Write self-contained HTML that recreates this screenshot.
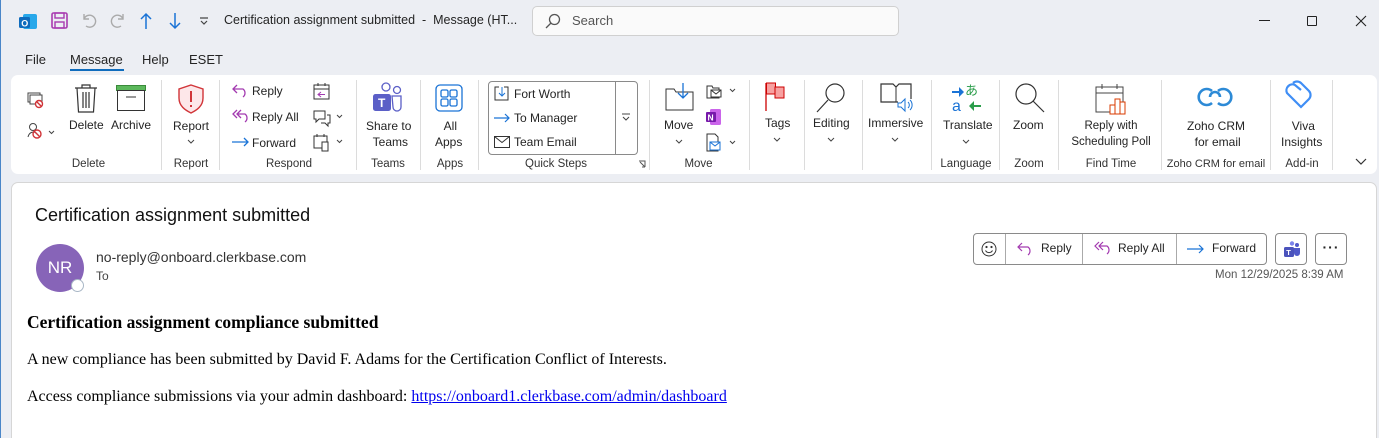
<!DOCTYPE html>
<html><head><meta charset="utf-8"><style>
*{margin:0;padding:0;box-sizing:border-box}
html,body{width:1379px;height:438px;overflow:hidden}
body{background:#eceef3;font-family:"Segoe UI","Liberation Sans",sans-serif;color:#242424;position:relative;border-left:1px solid #4a86c8}
.a{position:absolute;white-space:nowrap}
.t{font-size:12px}
.lbl{position:absolute;top:158px;font-size:11.5px;color:#333;text-align:center}
.sep{position:absolute;top:80px;width:1px;height:90px;background:#dcdcdc}
svg{position:absolute;overflow:visible}
</style></head><body>
<!-- title bar -->
<svg style="left:17px;top:12px" width="20" height="20"><rect x="5" y="2" width="14" height="15" rx="2" fill="#28a8ea"/><rect x="1" y="5" width="11" height="11" rx="1.5" fill="#0f6cbd"/><text x="3.2" y="14.5" font-size="9" font-weight="bold" fill="#fff" font-family="Liberation Sans">O</text></svg>
<svg style="left:50px;top:12px" width="18" height="18"><rect x="1" y="1" width="15" height="15" rx="1.5" fill="none" stroke="#a83ab0" stroke-width="1.6"/><rect x="4" y="1" width="9" height="5" fill="none" stroke="#a83ab0" stroke-width="1.4"/><rect x="4" y="10" width="9" height="6" fill="none" stroke="#a83ab0" stroke-width="1.4"/></svg>
<svg style="left:80px;top:12px" width="18" height="18" fill="none" stroke="#aaa" stroke-width="1.4"><path d="M3 2v5h5M3 7a6 6 0 1 1 2 7"/></svg>
<svg style="left:108px;top:12px" width="18" height="18" fill="none" stroke="#aaa" stroke-width="1.4"><path d="M14 2v5h-5M14 7a6 6 0 1 0-2 7"/></svg>
<svg style="left:138px;top:12px" width="14" height="18" fill="none" stroke="#1a73d6" stroke-width="1.5"><path d="M7 17V2M2 7l5-5 5 5"/></svg>
<svg style="left:167px;top:12px" width="14" height="18" fill="none" stroke="#1a73d6" stroke-width="1.5"><path d="M7 1v15M2 11l5 5 5-5"/></svg>
<svg style="left:198px;top:17px" width="10" height="8" fill="none" stroke="#444" stroke-width="1.2"><path d="M1 1h8M2 4l3 3 3-3"/></svg>
<div class="a t" style="left:223px;top:13px;font-size:12.5px">Certification assignment submitted&nbsp; -&nbsp; Message (HT...</div>
<div class="a" style="left:531px;top:6px;width:367px;height:30px;background:#fafafa;border:1px solid #d0d0d0;border-radius:5px"></div>
<svg style="left:544px;top:13px" width="16" height="16" fill="none" stroke="#555" stroke-width="1.3"><circle cx="9.5" cy="6.5" r="5"/><path d="M6 10l-5 5"/></svg>
<div class="a" style="left:571px;top:13px;font-size:13px;color:#555">Search</div>
<div class="a" style="left:1258px;top:20px;width:11px;height:1px;background:#222"></div>
<div class="a" style="left:1306px;top:16px;width:10px;height:10px;border:1px solid #222;border-radius:1px"></div>
<svg style="left:1354px;top:15px" width="12" height="12" stroke="#222" stroke-width="1.1"><path d="M1 1l10 10M11 1L1 11"/></svg>
<!-- tabs -->
<div class="a" style="left:24px;top:52px;font-size:13px">File</div>
<div class="a" style="left:69px;top:52px;font-size:13px">Message</div>
<div class="a" style="left:69px;top:69px;width:54px;height:2px;background:#0f6cbd"></div>
<div class="a" style="left:141px;top:52px;font-size:13px">Help</div>
<div class="a" style="left:188px;top:52px;font-size:13px">ESET</div>
<!-- ribbon -->
<div class="a" style="left:10px;top:75px;width:1366px;height:99px;background:#fff;border-radius:7px"></div>
<div class="sep" style="left:160px"></div><div class="sep" style="left:218px"></div><div class="sep" style="left:355px"></div><div class="sep" style="left:419px"></div><div class="sep" style="left:477px"></div><div class="sep" style="left:648px"></div><div class="sep" style="left:748px"></div><div class="sep" style="left:803px"></div><div class="sep" style="left:861px"></div><div class="sep" style="left:930px"></div><div class="sep" style="left:998px"></div><div class="sep" style="left:1057px"></div><div class="sep" style="left:1160px"></div><div class="sep" style="left:1269px"></div><div class="sep" style="left:1331px"></div>
<!-- delete group -->
<svg style="left:26px;top:92px" width="18" height="16"><rect x="1" y="1" width="12" height="9" fill="none" stroke="#444"/><rect x="3" y="3" width="12" height="9" fill="#fff" stroke="#444"/><circle cx="12" cy="12" r="3.5" fill="#fff" stroke="#d13438" stroke-width="1.4"/><path d="M9.5 9.5l5 5" stroke="#d13438" stroke-width="1.4"/></svg>
<svg style="left:26px;top:122px" width="30" height="18" fill="none"><circle cx="6" cy="5" r="3.5" stroke="#444"/><path d="M1 15c1-5 6-6 8-4" stroke="#444"/><circle cx="10" cy="12" r="4" stroke="#d13438" stroke-width="1.4"/><path d="M7 9l6 6" stroke="#d13438" stroke-width="1.4"/><path d="M22 9l2.5 2.5L27 9" stroke="#444"/></svg>
<svg style="left:73px;top:83px" width="24" height="30" fill="none" stroke="#333" stroke-width="1.2"><path d="M1 5h22M8 5V2h8v3M3 5l1.5 24h15L21 5M9 9v16M12 9v16M15 9v16"/></svg>
<div class="a t" style="left:68px;top:118px">Delete</div>
<svg style="left:115px;top:85px" width="30" height="27"><rect x="0.5" y="0.5" width="29" height="5" fill="#5cb85c" stroke="#3a8a3a"/><rect x="1.5" y="5.5" width="27" height="20" fill="none" stroke="#333"/><path d="M10 12h10" stroke="#333"/></svg>
<div class="a t" style="left:110px;top:118px">Archive</div>
<div class="lbl" style="left:60px;width:55px">Delete</div>
<!-- report -->
<svg style="left:176px;top:84px" width="28" height="30"><path d="M14 1l12 4v9c0 8-6 12-12 15C8 26 2 22 2 14V5z" fill="#fde7e9" stroke="#d13438" stroke-width="1.4"/><path d="M14 7v11M14 21v2" stroke="#d13438" stroke-width="2"/></svg>
<div class="a t" style="left:172px;top:119px">Report</div>
<svg style="left:186px;top:139px" width="8" height="5" fill="none" stroke="#444"><path d="M1 1l3 3 3-3"/></svg>
<div class="lbl" style="left:165px;width:50px">Report</div>
<!-- respond -->
<svg style="left:231px;top:84px" width="18" height="14" fill="none" stroke="#a33ab0" stroke-width="1.3"><path d="M5 1L1 5l4 4M1 5h10a5 5 0 0 1 0 8"/></svg>
<div class="a t" style="left:251px;top:84px">Reply</div>
<svg style="left:231px;top:109px" width="20" height="14" fill="none" stroke="#a33ab0" stroke-width="1.3"><path d="M5 1L1 5l4 4M9 1L5 5l4 4M5 5h8a5 5 0 0 1 0 8"/></svg>
<div class="a t" style="left:251px;top:110px">Reply All</div>
<svg style="left:231px;top:137px" width="18" height="10" fill="none" stroke="#1a73d6" stroke-width="1.3"><path d="M0 5h16M12 1l4 4-4 4"/></svg>
<div class="a t" style="left:251px;top:136px">Forward</div>
<svg style="left:312px;top:83px" width="18" height="18" fill="none"><rect x="1" y="2" width="15" height="14" stroke="#333"/><path d="M1 6h15M5 0v3M12 0v3" stroke="#333"/><path d="M8 9l-3 2.5 3 2.5M5 11.5h7" stroke="#a33ab0"/></svg>
<svg style="left:312px;top:109px" width="30" height="18" fill="none" stroke="#333"><path d="M1 2h11v8H6l-3 3v-3H1zM14 6h3v8h-2v3l-3-3H8"/><path d="M24 6l2.5 2.5L29 6" stroke="#444"/></svg>
<svg style="left:312px;top:134px" width="30" height="18" fill="none" stroke="#333"><rect x="1" y="2" width="13" height="12"/><path d="M4 0v3M11 0v3"/><rect x="9" y="8" width="6" height="9" fill="#fff"/><path d="M24 6l2.5 2.5L29 6" stroke="#444"/></svg>
<div class="lbl" style="left:258px;width:60px">Respond</div>
<!-- teams -->
<svg style="left:371px;top:82px" width="32" height="32"><circle cx="14" cy="5" r="4" fill="none" stroke="#5b5fc7" stroke-width="1.3"/><circle cx="25" cy="8" r="3.5" fill="none" stroke="#5b5fc7" stroke-width="1.3"/><path d="M20 14h9v11a4 4 0 0 1-8 0z" fill="none" stroke="#5b5fc7" stroke-width="1.3"/><rect x="1" y="12" width="18" height="17" rx="2.5" fill="#5b5fc7"/><text x="6" y="25" fill="#fff" font-size="12" font-weight="bold" font-family="Liberation Sans">T</text></svg>
<div class="a t" style="left:365px;top:118px;text-align:center;line-height:16px">Share to<br>&nbsp;Teams</div>
<div class="lbl" style="left:362px;width:50px">Teams</div>
<!-- apps -->
<svg style="left:434px;top:84px" width="28" height="28" fill="none" stroke="#1a73d6" stroke-width="1.3"><rect x="1" y="1" width="26" height="26" rx="4"/><rect x="6" y="6" width="7" height="7" rx="1.5"/><rect x="15" y="6" width="7" height="7" rx="1.5"/><rect x="6" y="15" width="7" height="7" rx="1.5"/><rect x="15" y="15" width="7" height="7" rx="1.5"/></svg>
<div class="a t" style="left:434px;top:118px;text-align:center;line-height:16px">&nbsp;All<br>Apps</div>
<div class="lbl" style="left:424px;width:50px">Apps</div>
<!-- quick steps -->
<div class="a" style="left:487px;top:81px;width:150px;height:74px;border:1px solid #8a8a8a;border-radius:4px"></div>
<div class="a" style="left:614px;top:81px;width:1px;height:74px;background:#8a8a8a"></div>
<svg style="left:620px;top:113px" width="10" height="8" fill="none" stroke="#444"><path d="M1 1h8M2 4l3 3 3-3"/></svg>
<svg style="left:493px;top:86px" width="16" height="16" fill="none"><path d="M5 1H1v13h13V1h-4" stroke="#333"/><path d="M8 1v9M5 7l3 3 3-3" stroke="#1a73d6"/></svg>
<div class="a t" style="left:513px;top:87px">Fort Worth</div>
<svg style="left:493px;top:113px" width="17" height="10" fill="none" stroke="#1a73d6" stroke-width="1.2"><path d="M0 5h15M11 1l4 4-4 4"/></svg>
<div class="a t" style="left:513px;top:111px">To Manager</div>
<svg style="left:493px;top:136px" width="17" height="12" fill="none" stroke="#333"><rect x="0.5" y="0.5" width="15" height="11"/><path d="M0.5 0.5l7.5 6 7.5-6"/></svg>
<div class="a t" style="left:513px;top:135px">Team Email</div>
<div class="lbl" style="left:520px;width:70px">Quick Steps</div>
<svg style="left:637px;top:160px" width="8" height="8" fill="none" stroke="#555"><path d="M1 1h6v6M2 2l5 5M4 7h3"/></svg>
<!-- move -->
<svg style="left:664px;top:82px" width="30" height="30" fill="none"><path d="M1 7h8l2 3h17v18H1z" stroke="#333"/><path d="M18 1v15M13 11l5 5 5-5" stroke="#1a73d6" stroke-width="1.3"/></svg>
<div class="a t" style="left:663px;top:118px">Move</div>
<svg style="left:674px;top:139px" width="8" height="5" fill="none" stroke="#444"><path d="M1 1l3 3 3-3"/></svg>
<svg style="left:705px;top:83px" width="30" height="16" fill="none" stroke="#333"><path d="M1 3h5l1 2h6v10H1z"/><rect x="5" y="7" width="10" height="7" fill="#fff"/><path d="M5 7l5 4 5-4"/><path d="M24 6l2.5 2.5L29 6" stroke="#444"/></svg>
<svg style="left:705px;top:108px" width="16" height="18"><rect x="4" y="1" width="11" height="16" rx="1.5" fill="#ca64ea"/><rect x="0" y="4" width="10" height="10" rx="1" fill="#7719aa"/><text x="1.5" y="12.5" font-size="8.5" font-weight="bold" fill="#fff" font-family="Liberation Sans">N</text></svg>
<svg style="left:705px;top:133px" width="30" height="20" fill="none"><path d="M1 1h8l3 3v14H1z" stroke="#333"/><rect x="4" y="9" width="10" height="8" fill="#fff" stroke="#1a73d6"/><path d="M4 9l5 4 5-4" stroke="#1a73d6"/><path d="M24 8l2.5 2.5L29 8" stroke="#444"/></svg>
<div class="lbl" style="left:670px;width:55px">Move</div>
<!-- tags -->
<svg style="left:764px;top:82px" width="22" height="30"><path d="M1 1v28" stroke="#c00" stroke-width="1.3"/><rect x="1.5" y="1" width="9" height="11" fill="#f7a1a1" stroke="#c00"/><rect x="10" y="5" width="9" height="11" fill="#f7a1a1" stroke="#c00"/></svg>
<div class="a t" style="left:764px;top:116px">Tags</div>
<svg style="left:772px;top:137px" width="8" height="5" fill="none" stroke="#444"><path d="M1 1l3 3 3-3"/></svg>
<!-- editing -->
<svg style="left:815px;top:81px" width="32" height="32" fill="none" stroke="#333" stroke-width="1.2"><circle cx="19" cy="12" r="9"/><path d="M12 19L1 31"/></svg>
<div class="a t" style="left:812px;top:116px">Editing</div>
<svg style="left:826px;top:137px" width="8" height="5" fill="none" stroke="#444"><path d="M1 1l3 3 3-3"/></svg>
<!-- immersive -->
<svg style="left:879px;top:82px" width="34" height="30" fill="none"><path d="M1 2h12l3 3 3-3h12v18H1z" stroke="#333" stroke-width="1.2"/><path d="M16 5v15" stroke="#333"/><rect x="18" y="17" width="14" height="12" fill="#fff" stroke="none"/><path d="M18 21h3l4-4v12l-4-4h-3z" stroke="#1a73d6"/><path d="M28 20a4 4 0 0 1 0 6M30 18a7 7 0 0 1 0 10" stroke="#1a73d6"/></svg>
<div class="a t" style="left:867px;top:116px">Immersive</div>
<svg style="left:890px;top:137px" width="8" height="5" fill="none" stroke="#444"><path d="M1 1l3 3 3-3"/></svg>
<!-- translate -->
<svg style="left:950px;top:83px" width="32" height="30"><path d="M1 8h7V4l5 5-5 5v-4H1z" fill="#1a73d6"/><text x="14" y="12" font-size="13" fill="#2a9d4a" font-family="Noto Sans CJK JP">あ</text><text x="1" y="28" font-size="16" fill="#1a73d6" font-family="Liberation Sans">a</text><path d="M30 22h-7v-4l-5 5 5 5v-4h7z" fill="#2a9d4a"/></svg>
<div class="a t" style="left:942px;top:118px">Translate</div>
<svg style="left:961px;top:139px" width="8" height="5" fill="none" stroke="#444"><path d="M1 1l3 3 3-3"/></svg>
<div class="lbl" style="left:935px;width:60px">Language</div>
<!-- zoom -->
<svg style="left:1013px;top:82px" width="32" height="32" fill="none" stroke="#333" stroke-width="1.2"><circle cx="12" cy="12" r="10"/><path d="M19 19l11 11"/></svg>
<div class="a t" style="left:1012px;top:118px">Zoom</div>
<div class="lbl" style="left:1003px;width:50px">Zoom</div>
<!-- find time -->
<svg style="left:1094px;top:83px" width="32" height="33" fill="none"><rect x="1" y="4" width="27" height="25" stroke="#444"/><path d="M1 10h27M7 1v5M22 1v5" stroke="#444"/><rect x="15" y="22" width="5" height="9" fill="#fff" stroke="#d83b01"/><rect x="20" y="16" width="5" height="15" fill="#fff" stroke="#d83b01"/><rect x="25" y="19" width="5" height="12" fill="#fff" stroke="#d83b01"/></svg>
<div class="a t" style="left:1068px;top:118px;width:84px;text-align:center;line-height:16px;font-size:11.5px">Reply with<br>Scheduling Poll</div>
<div class="lbl" style="left:1075px;width:70px">Find Time</div>
<!-- zoho -->
<svg style="left:1198px;top:86px" width="32" height="22" fill="none" stroke="#2d8ad6" stroke-width="2.6"><path d="M13 5a8 8 0 1 0 0 12"/><path d="M19 17a8 8 0 1 0 0-12"/><path d="M11 11a5 5 0 0 1 10 0"/></svg>
<div class="a t" style="left:1186px;top:118px;text-align:center;line-height:16px">Zoho CRM<br>&nbsp;for email</div>
<div class="lbl" style="left:1162px;width:106px;font-size:11px">Zoho CRM for email</div>
<!-- viva -->
<svg style="left:1284px;top:82px" width="32" height="32" fill="none" stroke="#3f8ef5" stroke-width="2.2"><path d="M16 8l-6-5a6 6 0 0 0-8 8l14 14 8-8a6 6 0 0 0 0-8l-8-8a6 6 0 0 0-8 0"/></svg>
<div class="a t" style="left:1280px;top:118px;text-align:center;line-height:16px">&nbsp;Viva<br>Insights</div>
<div class="lbl" style="left:1275px;width:52px">Add-in</div>
<svg style="left:1354px;top:158px" width="12" height="7" fill="none" stroke="#333" stroke-width="1.2"><path d="M1 1l5 5 5-5"/></svg>
<!-- message pane -->
<div class="a" style="left:10px;top:182px;width:1366px;height:270px;background:#fff;border:1px solid #d6d6d6;border-radius:7px"></div>
<div class="a" style="left:34px;top:205px;font-size:18px;color:#111">Certification assignment submitted</div>
<div class="a" style="left:35px;top:244px;width:48px;height:48px;border-radius:50%;background:#8764b8;color:#fff;font-size:17px;text-align:center;line-height:48px">NR</div>
<div class="a" style="left:70px;top:279px;width:13px;height:13px;border-radius:50%;background:#fff;border:1.5px solid #a9b7c6"></div>
<div class="a" style="left:95px;top:249px;font-size:14px;color:#333">no-reply@onboard.clerkbase.com</div>
<div class="a" style="left:95px;top:269px;font-size:12px;color:#444">To</div>
<div class="a" style="left:972px;top:233px;width:294px;height:32px;border:1px solid #8a8a8a;border-radius:4px"></div>
<div class="a" style="left:1004px;top:234px;width:1px;height:30px;background:#aaa"></div>
<div class="a" style="left:1081px;top:234px;width:1px;height:30px;background:#aaa"></div>
<div class="a" style="left:1175px;top:234px;width:1px;height:30px;background:#aaa"></div>
<svg style="left:980px;top:241px" width="16" height="16" fill="none" stroke="#333"><circle cx="8" cy="8" r="7"/><circle cx="5.5" cy="6" r=".6" fill="#333"/><circle cx="10.5" cy="6" r=".6" fill="#333"/><path d="M4.5 9.5a4 4 0 0 0 7 0"/></svg>
<svg style="left:1016px;top:242px" width="18" height="14" fill="none" stroke="#a33ab0" stroke-width="1.2"><path d="M5 1L1 5l4 4M1 5h10a5 5 0 0 1 0 8"/></svg>
<div class="a t" style="left:1040px;top:241px">Reply</div>
<svg style="left:1093px;top:241px" width="20" height="14" fill="none" stroke="#a33ab0" stroke-width="1.2"><path d="M5 1L1 5l4 4M9 1L5 5l4 4M5 5h8a5 5 0 0 1 0 8"/></svg>
<div class="a t" style="left:1117px;top:241px">Reply All</div>
<svg style="left:1186px;top:244px" width="18" height="10" fill="none" stroke="#1a73d6" stroke-width="1.2"><path d="M0 5h16M12 1l4 4-4 4"/></svg>
<div class="a t" style="left:1211px;top:241px">Forward</div>
<div class="a" style="left:1274px;top:233px;width:32px;height:32px;border:1px solid #8a8a8a;border-radius:4px"></div>
<svg style="left:1282px;top:241px" width="18" height="16"><circle cx="9" cy="2.5" r="2.2" fill="#7b83eb"/><circle cx="14" cy="4" r="2" fill="#5059c9"/><path d="M11 7h6v5a3 3 0 0 1-6 0z" fill="#5059c9"/><rect x="1" y="6" width="10" height="10" rx="1.5" fill="#4b53bc"/><text x="3.3" y="14" font-size="7.5" font-weight="bold" fill="#fff" font-family="Liberation Sans">T</text></svg>
<div class="a" style="left:1314px;top:233px;width:32px;height:32px;border:1px solid #8a8a8a;border-radius:4px;text-align:center;font-size:14px;line-height:26px;font-weight:bold;letter-spacing:1px">···</div>
<div class="a" style="left:1214px;top:269px;font-size:11.5px;color:#555">Mon 12/29/2025 8:39 AM</div>
<div class="a" style="left:26px;top:312px;font-family:'Liberation Serif',serif;font-size:17.5px;font-weight:bold;color:#000">Certification assignment compliance submitted</div>
<div class="a" style="left:26px;top:351px;font-family:'Liberation Serif',serif;font-size:16px;color:#000">A new compliance has been submitted by David F. Adams for the Certification Conflict of Interests.</div>
<div class="a" style="left:26px;top:388px;font-family:'Liberation Serif',serif;font-size:16px;color:#000">Access compliance submissions via your admin dashboard: <span style="color:#00e;text-decoration:underline">https://onboard1.clerkbase.com/admin/dashboard</span></div>
</body></html>
